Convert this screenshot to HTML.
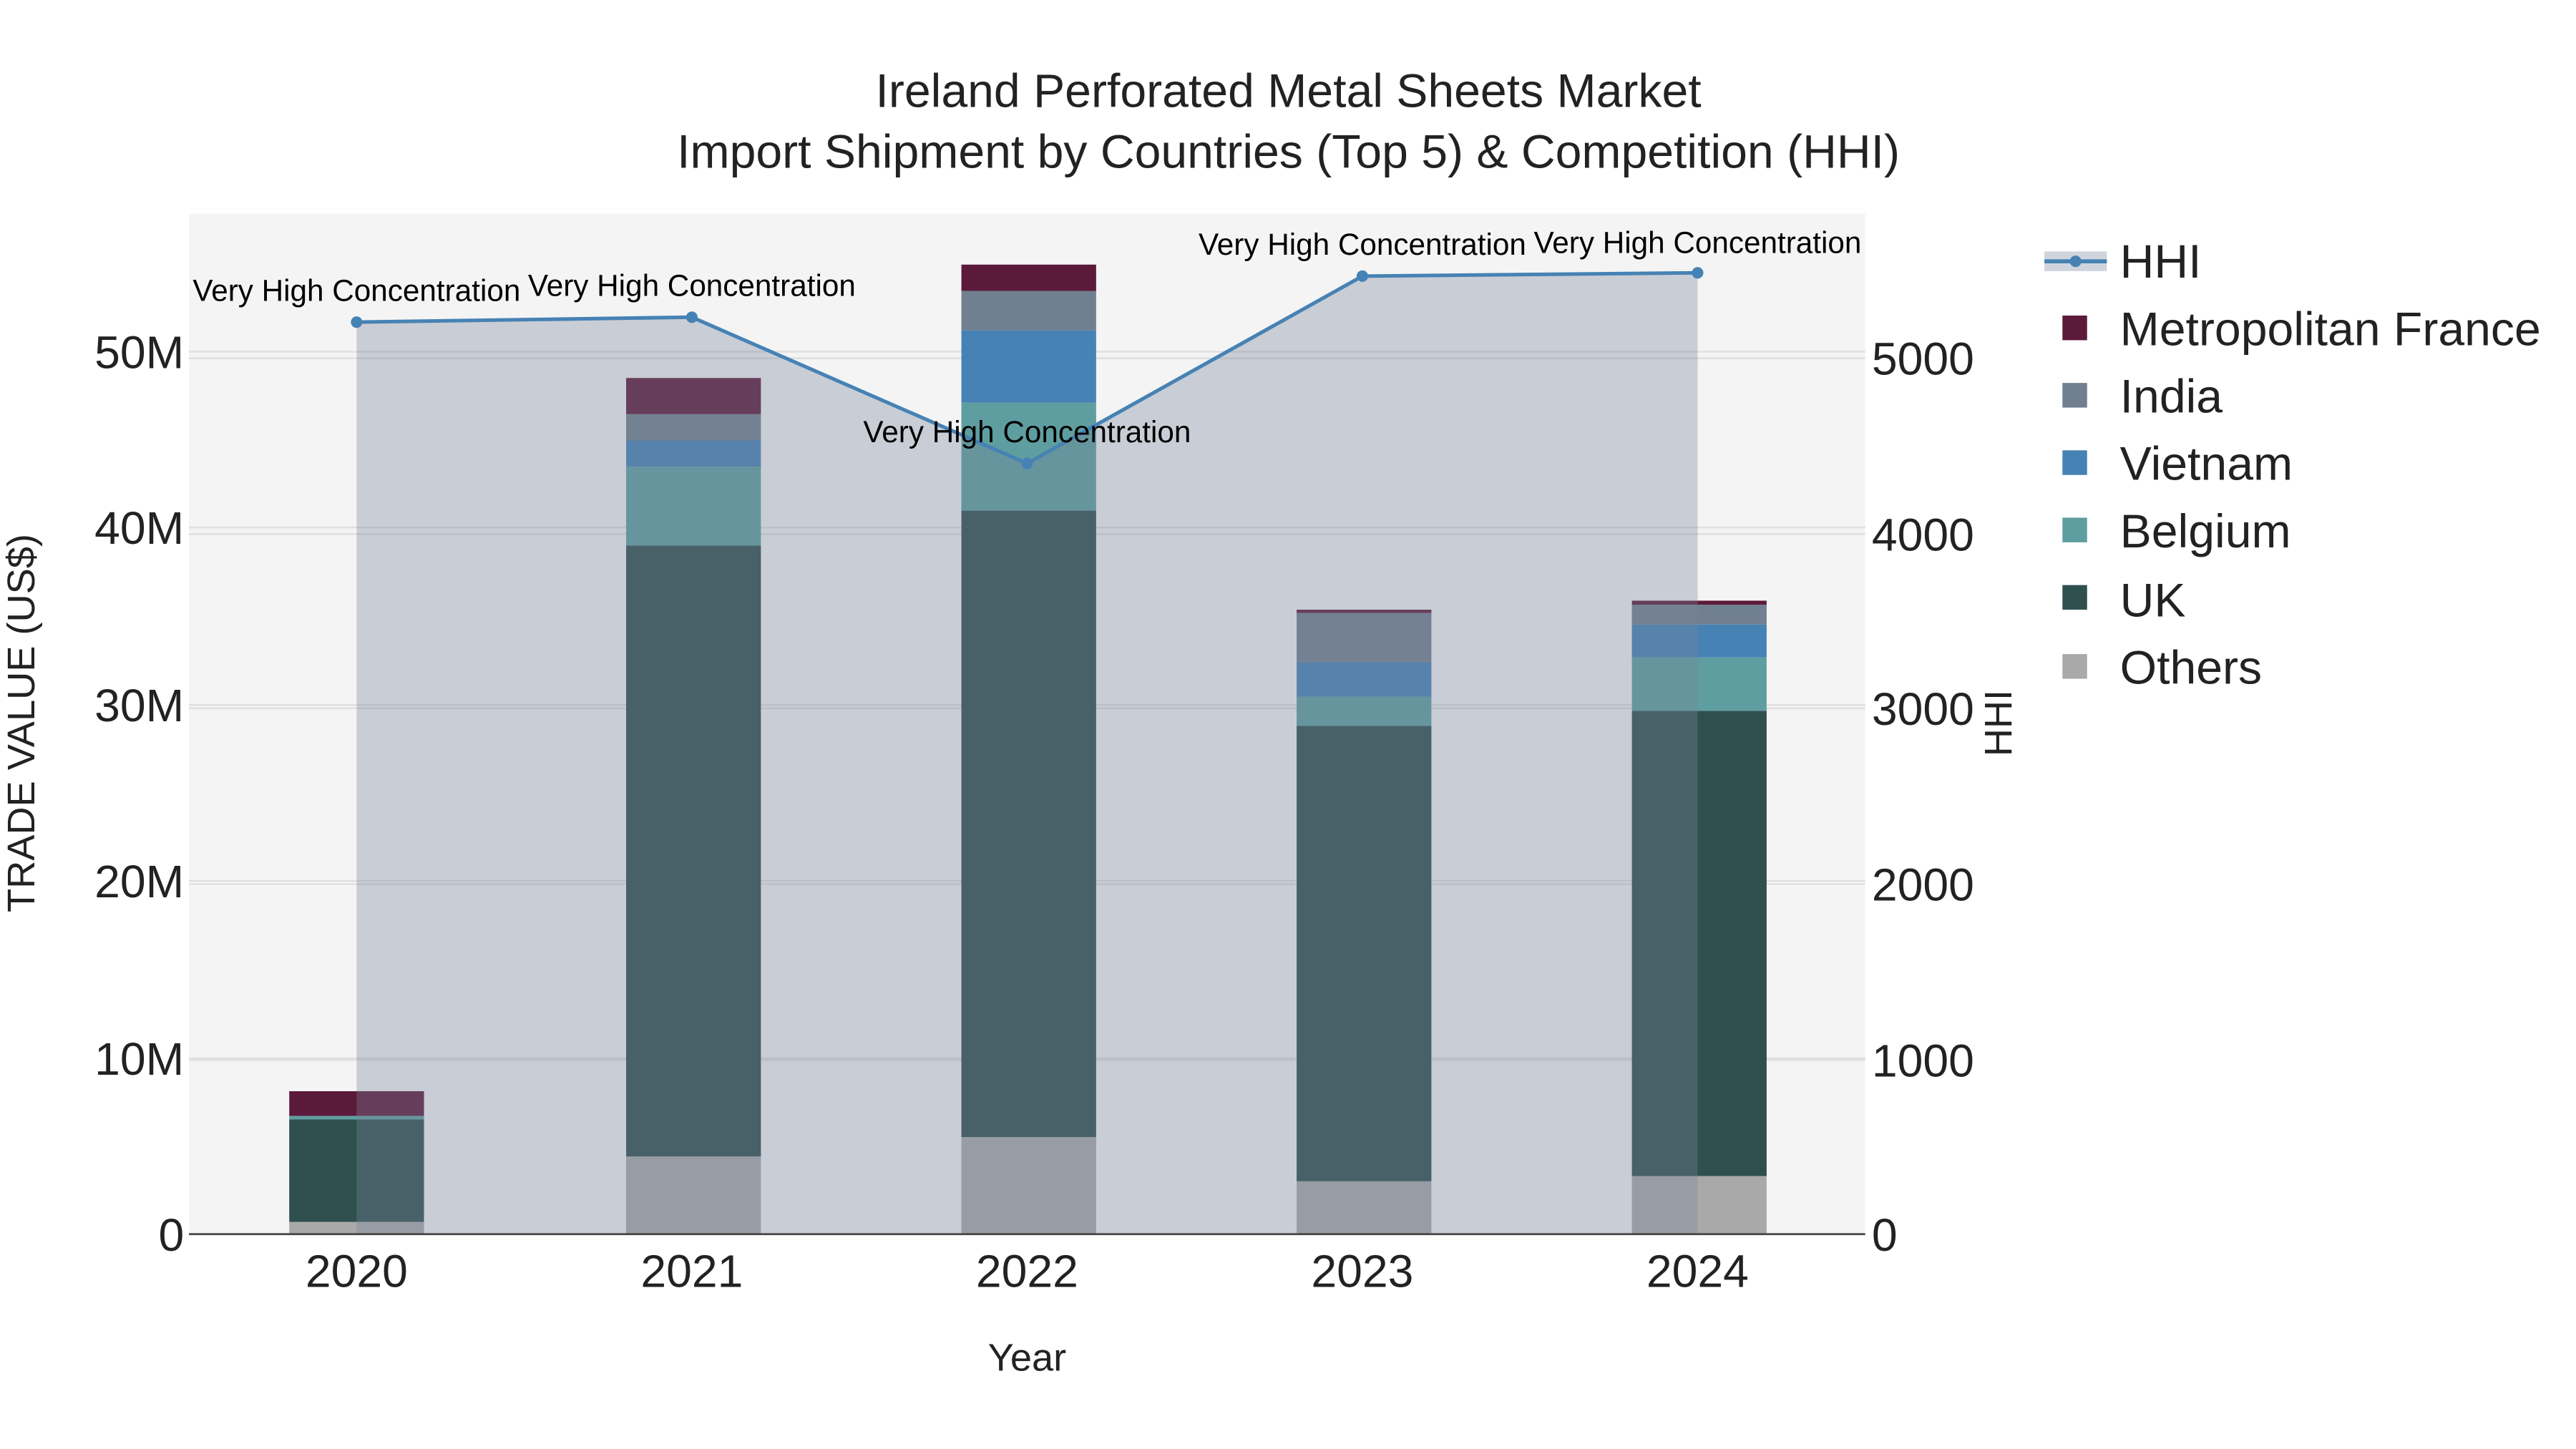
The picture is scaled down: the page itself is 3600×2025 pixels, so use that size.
<!DOCTYPE html>
<html><head><meta charset="utf-8"><style>
html,body{margin:0;padding:0;background:#fff;}
svg{display:block;font-family:"Liberation Sans",Arial,sans-serif;}
</style></head><body>
<svg width="3600" height="2025" viewBox="0 0 1567.5 881.7" xmlns="http://www.w3.org/2000/svg">
<rect width="1567.5" height="881.7" fill="#fff"/>
<rect x="115" y="130" width="1020" height="621" fill="#f4f4f4"/>
<g stroke="#dedede" stroke-width="1">
<line x1="115" x2="1135" y1="644" y2="644"/><line x1="115" x2="1135" y1="536" y2="536"/>
<line x1="115" x2="1135" y1="429" y2="429"/><line x1="115" x2="1135" y1="321" y2="321"/>
<line x1="115" x2="1135" y1="214" y2="214"/>
<line x1="115" x2="1135" y1="645" y2="645"/><line x1="115" x2="1135" y1="538" y2="538"/>
<line x1="115" x2="1135" y1="431" y2="431"/><line x1="115" x2="1135" y1="325" y2="325"/>
<line x1="115" x2="1135" y1="218" y2="218"/>
</g>
<g>
<rect x="176" y="743.5" width="82" height="7.5" fill="#a9a9a9"/>
<rect x="176" y="681.2" width="82" height="62.3" fill="#2f4f4f"/>
<rect x="176" y="679" width="82" height="2.2" fill="#5f9ea0"/>
<rect x="176" y="664" width="82" height="15" fill="#5c1a3a"/>
<rect x="381" y="703.7" width="82" height="47.3" fill="#a9a9a9"/>
<rect x="381" y="332" width="82" height="371.7" fill="#2f4f4f"/>
<rect x="381" y="284" width="82" height="48" fill="#5f9ea0"/>
<rect x="381" y="268" width="82" height="16" fill="#4682b4"/>
<rect x="381" y="252" width="82" height="16" fill="#708090"/>
<rect x="381" y="230" width="82" height="22" fill="#5c1a3a"/>
<rect x="585" y="691.9" width="82" height="59.1" fill="#a9a9a9"/>
<rect x="585" y="310.7" width="82" height="381.2" fill="#2f4f4f"/>
<rect x="585" y="245" width="82" height="65.7" fill="#5f9ea0"/>
<rect x="585" y="201" width="82" height="44" fill="#4682b4"/>
<rect x="585" y="177" width="82" height="24" fill="#708090"/>
<rect x="585" y="161" width="82" height="16" fill="#5c1a3a"/>
<rect x="789" y="718.8" width="82" height="32.2" fill="#a9a9a9"/>
<rect x="789" y="441.7" width="82" height="277.1" fill="#2f4f4f"/>
<rect x="789" y="424" width="82" height="17.7" fill="#5f9ea0"/>
<rect x="789" y="403" width="82" height="21" fill="#4682b4"/>
<rect x="789" y="373" width="82" height="30" fill="#708090"/>
<rect x="789" y="371" width="82" height="2" fill="#5c1a3a"/>
<rect x="993" y="715.6" width="82" height="35.4" fill="#a9a9a9"/>
<rect x="993" y="432.5" width="82" height="283.1" fill="#2f4f4f"/>
<rect x="993" y="400" width="82" height="32.5" fill="#5f9ea0"/>
<rect x="993" y="380" width="82" height="20" fill="#4682b4"/>
<rect x="993" y="368" width="82" height="12" fill="#708090"/>
<rect x="993" y="365.5" width="82" height="2.5" fill="#5c1a3a"/>
</g>
<polygon points="217,196 421,193 625,282 829,168 1033,166 1033,751 217,751" fill="rgba(121,132,155,0.35)"/>
<polyline points="217,196 421,193 625,282 829,168 1033,166" fill="none" stroke="#4682b4" stroke-width="2.2"/>
<g fill="#4682b4"><circle cx="217" cy="196" r="3.5"/><circle cx="421" cy="193" r="3.5"/><circle cx="625" cy="282" r="3.5"/><circle cx="829" cy="168" r="3.5"/><circle cx="1033" cy="166" r="3.5"/></g>
<g font-size="18.4" fill="#000" text-anchor="middle">
<text x="217" y="183">Very High Concentration</text>
<text x="421" y="180">Very High Concentration</text>
<text x="625" y="269">Very High Concentration</text>
<text x="829" y="155">Very High Concentration</text>
<text x="1033" y="154">Very High Concentration</text>
</g>
<line x1="115" x2="1135" y1="751" y2="751" stroke="#444" stroke-width="1.2"/>
<g font-size="28" fill="#222" text-anchor="end">
<text x="112" y="761">0</text><text x="112" y="654">10M</text><text x="112" y="546">20M</text>
<text x="112" y="439">30M</text><text x="112" y="331">40M</text><text x="112" y="224">50M</text>
</g>
<g font-size="28" fill="#222" text-anchor="start">
<text x="1139" y="761">0</text><text x="1139" y="655">1000</text><text x="1139" y="548">2000</text>
<text x="1139" y="441">3000</text><text x="1139" y="335">4000</text><text x="1139" y="228">5000</text>
</g>
<g font-size="28" fill="#222" text-anchor="middle">
<text x="217" y="783">2020</text><text x="421" y="783">2021</text><text x="625" y="783">2022</text>
<text x="829" y="783">2023</text><text x="1033" y="783">2024</text>
</g>
<text x="625" y="834" font-size="23.6" text-anchor="middle" fill="#222">Year</text>
<text transform="translate(21,440) rotate(-90)" font-size="23.6" text-anchor="middle" fill="#222">TRADE VALUE (US$)</text>
<text transform="translate(1224,440) rotate(-90)" font-size="23.6" text-anchor="middle" fill="#222">HHI</text>
<g font-size="28.8" fill="#222" text-anchor="middle">
<text x="784" y="65">Ireland Perforated Metal Sheets Market</text>
<text x="784" y="102">Import Shipment by Countries (Top 5) &amp; Competition (HHI)</text>
</g>
<rect x="1244" y="153" width="38" height="12" fill="rgba(121,132,155,0.35)"/>
<line x1="1244" x2="1282" y1="159" y2="159" stroke="#4682b4" stroke-width="2.5"/>
<circle cx="1263" cy="159" r="3.5" fill="#4682b4"/>
<g>
<rect x="1255" y="192" width="15" height="15" fill="#5c1a3a"/>
<rect x="1255" y="233" width="15" height="15" fill="#708090"/>
<rect x="1255" y="274" width="15" height="15" fill="#4682b4"/>
<rect x="1255" y="315" width="15" height="15" fill="#5f9ea0"/>
<rect x="1255" y="356" width="15" height="15" fill="#2f4f4f"/>
<rect x="1255" y="398" width="15" height="15" fill="#a9a9a9"/>
</g>
<g font-size="28.8" fill="#222">
<text x="1290" y="169">HHI</text>
<text x="1290" y="210">Metropolitan France</text>
<text x="1290" y="251">India</text>
<text x="1290" y="292">Vietnam</text>
<text x="1290" y="333">Belgium</text>
<text x="1290" y="375">UK</text>
<text x="1290" y="416">Others</text>
</g>
</svg>
</body></html>
